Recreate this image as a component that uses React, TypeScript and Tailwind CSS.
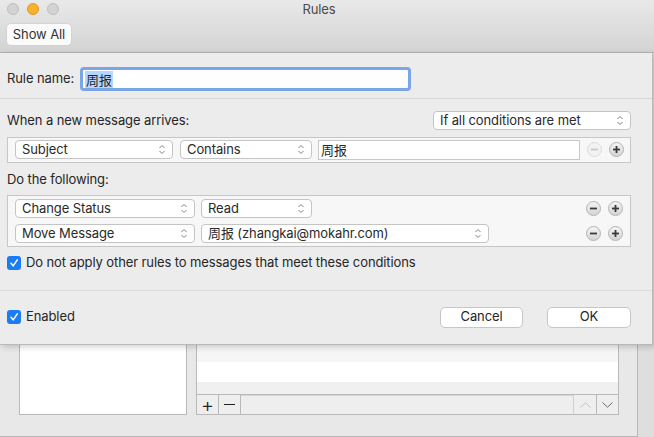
import React from "react";

const font = { fontFamily: "Inter, 'Noto Sans CJK SC', sans-serif", letterSpacing: "-0.1px" };

function Chevrons() {
  return (
    <svg width="8" height="11" viewBox="0 0 8 11" className="shrink-0">
      <path d="M1.5 4 L4 1.5 L6.5 4" fill="none" stroke="#808080" strokeWidth="1" />
      <path d="M1.5 7 L4 9.5 L6.5 7" fill="none" stroke="#808080" strokeWidth="1" />
    </svg>
  );
}

function Popup({ label, width }: { label: string; width: string }) {
  return (
    <div
      className={`${width} flex h-[19px] shrink-0 items-center justify-between rounded-[4px] border border-[#c4c4c4] bg-white pl-[6px] pr-[6px] text-[13px] text-[#2a2a2a]`}
    >
      <span className="leading-none">{label}</span>
      <Chevrons />
    </div>
  );
}

function RoundButton({ kind, disabled }: { kind: "plus" | "minus"; disabled?: boolean }) {
  const stroke = disabled ? "#c8c8c8" : "#3a3a3a";
  return (
    <span
      className={`flex h-[15px] w-[15px] items-center justify-center rounded-full border ${
        disabled ? "border-[#dcdcdc] bg-[#f2f2f2]" : "border-[#b4b4b4] bg-gradient-to-b from-[#f4f4f4] to-[#d4d4d4]"
      }`}
    >
      <svg width="9" height="9" viewBox="0 0 9 9">
        <path d="M1 4.5 H8" stroke={stroke} strokeWidth="1.8" />
        {kind === "plus" ? <path d="M4.5 1 V8" stroke={stroke} strokeWidth="1.8" /> : null}
      </svg>
    </span>
  );
}

function Checkbox() {
  return (
    <span className="flex h-[14px] w-[14px] shrink-0 items-center justify-center rounded-[3px] bg-[#1c7cf4]">
      <svg width="10" height="10" viewBox="0 0 10 10">
        <path d="M2 5.3 L4.2 7.8 L8.3 1.8" fill="none" stroke="white" strokeWidth="1.5" strokeLinecap="round" />
      </svg>
    </span>
  );
}

function Light({ color, border }: { color: string; border: string }) {
  return <span className={`h-[12px] w-[12px] rounded-full border ${color} ${border}`} />;
}

export default function App() {
  return (
    <div className="relative h-[437px] w-[654px] overflow-hidden bg-[#dedede]" style={font}>
      {/* window title bar */}
      <div className="relative h-[53px] border-b border-[#b3b3b3] bg-gradient-to-b from-[#e9e9e9] to-[#d3d3d3]">
        <div className="flex gap-[8px] pl-[7px] pt-[3px]">
          <Light color="bg-[#d3d3d3]" border="border-[#bdbdbd]" />
          <Light color="bg-[#f8b030]" border="border-[#de9a25]" />
          <Light color="bg-[#d3d3d3]" border="border-[#bdbdbd]" />
        </div>
        <div className="absolute left-0 top-0 w-[638px] text-center text-[13px] text-[#4a4a4a]">Rules</div>
        <div className="ml-[7px] mt-[9px] flex h-[21px] w-[64px] items-center justify-center rounded-[4px] bg-[#fbfbfb] text-[13px] text-[#333] shadow-[0_0_0_0.5px_#c9c9c9]">
          Show All
        </div>
      </div>

      {/* window body */}
      <div className="flex h-[384px] w-[638px] items-end border-r border-b border-[#b8b8b8] bg-[#e8e8e8] pb-[21px] pl-[19px]">
        <div className="h-[200px] w-[168px] border border-[#b9b9b9] bg-white" />
        <div className="ml-[9px] flex h-[200px] w-[423px] flex-col border border-[#b9b9b9]">
          <div className="flex-1 bg-gradient-to-b from-[#efefef] to-[#f6f6f6]" />
          <div className="h-[20px] bg-white" />
          <div className="h-[12px] bg-[#f0f0f0]" />
          <div className="flex h-[20px] border-t border-[#b9b9b9] bg-[#eeeeee]">
            <span className="flex w-[22px] items-center justify-center border-r border-[#b9b9b9] text-[20px] font-light leading-none text-[#222]">+</span>
            <span className="flex w-[22px] items-center justify-center border-r border-[#b9b9b9]">
              <span className="h-px w-[11px] bg-[#222]" />
            </span>
            <span className="flex-1 border-t border-[#d6d6d6]" />
            <span className="flex w-[23px] items-center justify-center border-l border-[#d0d0d0]">
              <svg width="11" height="6" viewBox="0 0 11 6">
                <path d="M0.5 5.5 L5.5 0.8 L10.5 5.5" fill="none" stroke="#c2c2c2" />
              </svg>
            </span>
            <span className="flex w-[22px] items-center justify-center border-l border-[#b9b9b9]">
              <svg width="11" height="6" viewBox="0 0 11 6">
                <path d="M0.5 0.5 L5.5 5.2 L10.5 0.5" fill="none" stroke="#6a6a6a" />
              </svg>
            </span>
          </div>
        </div>
      </div>

      {/* sheet */}
      <div className="absolute left-0 top-[53px] h-[292px] w-[653px] border-r border-b border-[#b9b9b9] bg-[#ececec] text-[13px] text-[#262626] shadow-[2px_2px_6px_rgba(0,0,0,0.18)]">
        <div className="flex items-center pl-[7px] pt-[14px]">
          <span className="w-[73px]">Rule name:</span>
          <div className="flex h-[24px] w-[331px] items-center rounded-[4px] border-[3px] border-[#7aa6e8] bg-white pl-[2px]">
            <span className="bg-[#b3d7ff] px-px leading-[17px]" style={{ fontFamily: "'Noto Sans CJK SC', sans-serif" }}>
              周报
            </span>
          </div>
        </div>

        <div className="mt-[7px] h-px bg-[#d6d6d6]" />

        <div className="mt-[12px] flex items-center justify-between pl-[7px] pr-[21px]">
          <span>When a new message arrives:</span>
          <Popup label="If all conditions are met" width="w-[198px]" />
        </div>

        <div className="ml-[7px] mt-[6px] flex h-[26px] w-[624px] items-center border border-[#c6c6c6] bg-[#f7f7f7] pl-[7px]">
          <Popup label="Subject" width="w-[158px]" />
          <div className="ml-[7px]">
            <Popup label="Contains" width="w-[132px]" />
          </div>
          <div className="ml-[6px] flex h-[20px] w-[262px] items-center border border-[#c8c8c8] bg-white pl-[2px]" style={{ fontFamily: "'Noto Sans CJK SC', sans-serif" }}>
            周报
          </div>
          <div className="ml-[7px] flex gap-[7px]">
            <RoundButton kind="minus" disabled />
            <RoundButton kind="plus" />
          </div>
        </div>

        <div className="ml-[7px] mt-[7px]">Do the following:</div>

        <div className="ml-[7px] mt-[6px] flex h-[52px] w-[624px] flex-col justify-center gap-[6px] border border-[#c6c6c6] bg-[#f7f7f7] pl-[7px]">
          <div className="flex items-center">
            <Popup label="Change Status" width="w-[180px]" />
            <div className="ml-[6px]">
              <Popup label="Read" width="w-[111px]" />
            </div>
            <div className="ml-auto mr-[7px] flex gap-[7px]">
              <RoundButton kind="minus" />
              <RoundButton kind="plus" />
            </div>
          </div>
          <div className="flex items-center">
            <Popup label="Move Message" width="w-[180px]" />
            <div className="ml-[6px]">
              <Popup label="周报 (zhangkai@mokahr.com)" width="w-[288px]" />
            </div>
            <div className="ml-auto mr-[7px] flex gap-[7px]">
              <RoundButton kind="minus" />
              <RoundButton kind="plus" />
            </div>
          </div>
        </div>

        <div className="ml-[7px] mt-[6px] flex items-center gap-[5px]">
          <Checkbox />
          <span>Do not apply other rules to messages that meet these conditions</span>
        </div>

        <div className="mt-[17px] h-px bg-[#dcdcdc]" />

        <div className="mt-[16px] flex items-center pl-[7px] pr-[21px]">
          <Checkbox />
          <span className="ml-[5px]">Enabled</span>
          <div className="ml-auto flex gap-[24px]">
            <div className="flex h-[21px] w-[83px] items-center justify-center rounded-[5px] border border-[#c6c6c6] bg-white">Cancel</div>
            <div className="flex h-[21px] w-[84px] items-center justify-center rounded-[5px] border border-[#c6c6c6] bg-white">OK</div>
          </div>
        </div>
      </div>
    </div>
  );
}
